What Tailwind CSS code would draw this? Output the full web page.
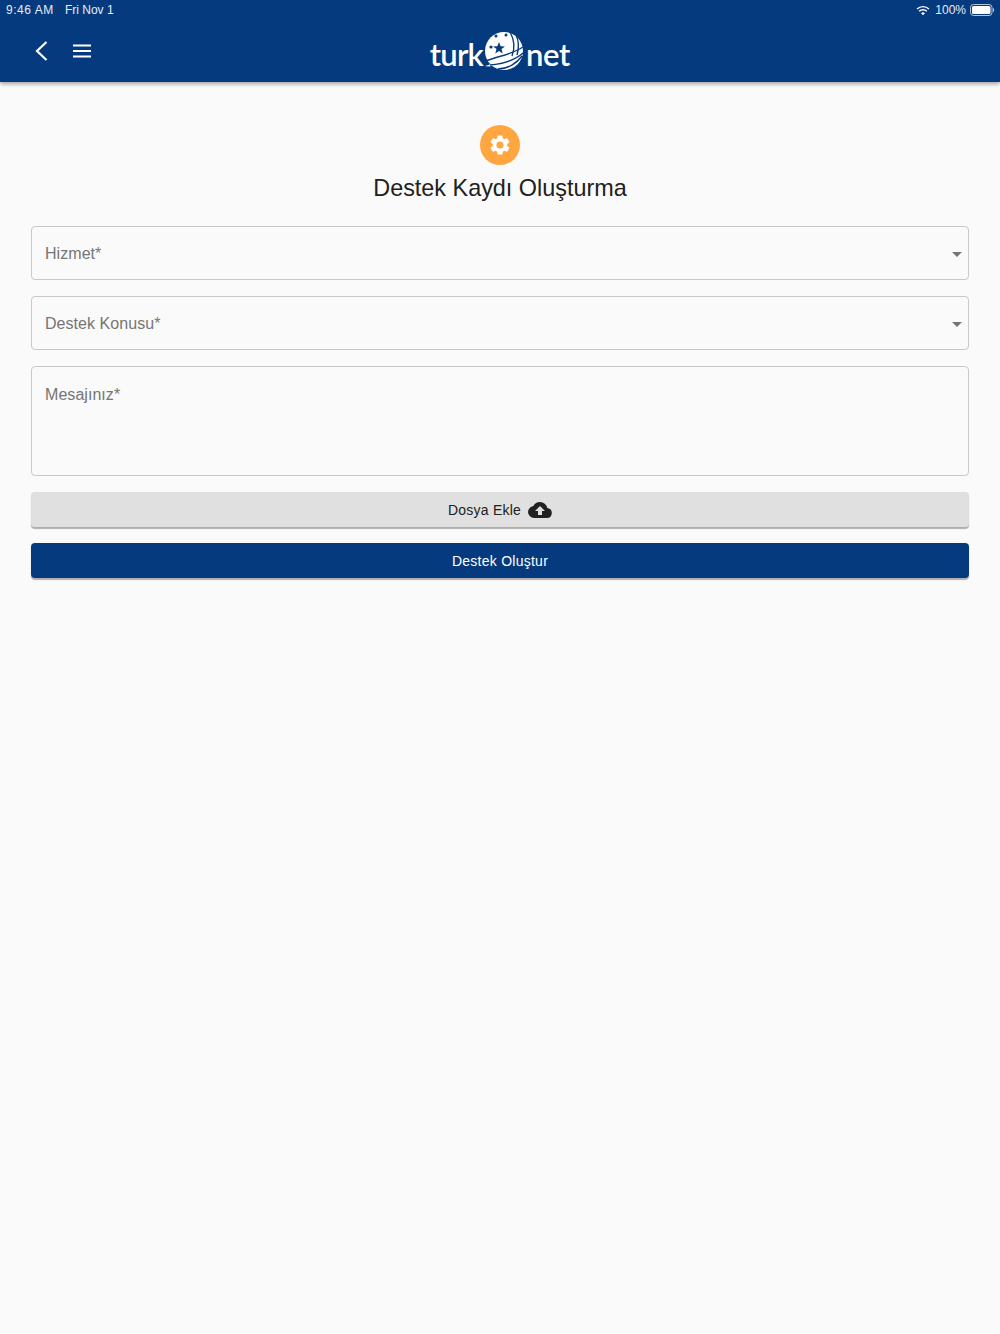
<!DOCTYPE html>
<html lang="tr">
<head>
    <meta charset="UTF-8">
    <meta name="viewport" content="width=device-width, initial-scale=1.0">
    <title>Destek Kaydı Oluşturma</title>
    <script src="https://cdn.jsdelivr.net/npm/@tailwindcss/browser@4"></script>
</head>
<body class="w-[1000px] h-[1334px] overflow-hidden bg-[#fafafa] font-['Liberation_Sans',sans-serif]">

<!-- header -->
<header class="h-[82px] bg-[#063a7e] text-white shadow-[0_2px_4px_rgba(0,0,0,0.35)]">
    <div class="h-[20px] pl-[6px] pr-[5px] flex items-center justify-between text-[12px] text-[#e6ecf4]">
        <div class="flex gap-[11px]">
            <span class="tracking-[0.55px]">9:46 AM</span>
            <span>Fri Nov 1</span>
        </div>
        <div class="flex items-center gap-[4px]">
            <svg class="mr-[1px]" width="14" height="11" viewBox="0 0 16 12" fill="none" stroke="#fff" stroke-width="1.7">
                <path d="M1.2 4.4a9.6 9.6 0 0 1 13.6 0"/>
                <path d="M3.6 6.9a6.2 6.2 0 0 1 8.8 0"/>
                <path d="M8 11.4l-2.2-2.2a3.1 3.1 0 0 1 4.4 0z" fill="#fff" stroke="none"/>
            </svg>
            <span>100%</span>
            <svg width="25" height="12" viewBox="0 0 25 12">
                <rect x="0.5" y="0.5" width="21.5" height="11" rx="3" fill="none" stroke="#b9c6d8"/>
                <rect x="2" y="2" width="18.5" height="8" rx="1.6" fill="#fff"/>
                <path d="M23 4v4a2 2 0 0 0 1.2-2A2 2 0 0 0 23 4z" fill="#b9c6d8"/>
            </svg>
        </div>
    </div>
    <div class="relative h-[62px] flex items-center justify-center">
        <div class="absolute left-[35px] top-[21px] flex items-center gap-[24px]">
            <svg width="13" height="20" viewBox="0 0 13 20" fill="none" stroke="#fff" stroke-width="2.2">
                <path d="M11.5 1L2 10l9.5 9"/>
            </svg>
            <svg width="20" height="14" viewBox="0 0 20 14" fill="#fff">
                <rect x="1" y="0.5" width="18" height="2"/>
                <rect x="1" y="6" width="18" height="2"/>
                <rect x="1" y="11.5" width="18" height="2"/>
            </svg>
        </div>
        <!-- logo -->
        <div class="flex items-end mt-[1px] font-['Lato',sans-serif] text-[31px] leading-[31px] font-semibold text-white">
            <span class="mb-[2px] tracking-[-0.8px]">turk</span>
            <svg class="ml-[1px] mr-[2px]" width="40" height="41" viewBox="0 0 40 41">
                <circle cx="20" cy="20" r="19" fill="#fff"/>
                <path d="M1 35c5-1 9-4 11-2-3 2-7 3-11 2z" fill="#fff"/>
                <g fill="none" stroke="#063a7e" stroke-width="1.4">
                    <path d="M26 1c4 7 5 16 2 24"/>
                    <path d="M32 4c3 6 3 13 1 20"/>
                    <path d="M2 30c12-5 25-6 37-14"/>
                    <path d="M6 34c12-1 24-4 33-12"/>
                    <path d="M14 38c10 0 19-6 24-13"/>
                </g>
                <path fill="#063a7e" d="M15 11l1.6 4.2 4.4.2-3.5 2.7 1.2 4.3-3.7-2.5-3.7 2.5 1.2-4.3-3.5-2.7 4.4-.2z"/>
                <circle cx="7" cy="16" r="1.6" fill="#063a7e"/>
                <circle cx="12" cy="5" r="1.5" fill="#063a7e"/>
                <circle cx="22" cy="4" r="1.5" fill="#063a7e"/>
            </svg>
            <span class="mb-[2px] tracking-[-0.3px]">net</span>
        </div>
    </div>
</header>

<main class="px-[31px]">
    <div class="flex flex-col items-center pt-[43px]">
        <div class="w-[40px] h-[40px] rounded-full bg-[#ffa640] flex items-center justify-center">
            <svg width="24" height="24" viewBox="0 0 24 24" fill="#fff">
                <path d="M19.14 12.94c.04-.3.06-.61.06-.94 0-.32-.02-.64-.07-.94l2.03-1.58a.49.49 0 0 0 .12-.61l-1.92-3.32a.49.49 0 0 0-.59-.22l-2.39.96c-.5-.38-1.03-.7-1.62-.94l-.36-2.54a.48.48 0 0 0-.48-.41h-3.84a.48.48 0 0 0-.47.41l-.36 2.54c-.59.24-1.13.57-1.62.94l-2.39-.96a.48.48 0 0 0-.59.22L2.74 8.87a.47.47 0 0 0 .12.61l2.03 1.58c-.05.3-.09.63-.09.94s.02.64.07.94l-2.03 1.58a.49.49 0 0 0-.12.61l1.92 3.32c.12.22.37.29.59.22l2.39-.96c.5.38 1.03.7 1.62.94l.36 2.54c.05.24.24.41.48.41h3.84c.24 0 .44-.17.47-.41l.36-2.54c.59-.24 1.13-.56 1.62-.94l2.39.96c.22.08.47 0 .59-.22l1.92-3.32a.47.47 0 0 0-.12-.61l-2.01-1.58zM12 15.6A3.6 3.6 0 1 1 12 8.4a3.6 3.6 0 0 1 0 7.2z"/>
            </svg>
        </div>
        <h1 class="mt-[9px] h-[28px] text-[23.4px] leading-[28px] text-[#212121]">Destek Kaydı Oluşturma</h1>
    </div>

    <form class="mt-[24px] flex flex-col gap-[16px]">
        <div class="relative h-[54px] border border-[#c8c8c8] rounded-[4px] pl-[13px] pt-[2px] flex items-center text-[16px] tracking-[0.05px] text-[#757575]">
            <span>Hizmet*</span>
            <span class="absolute right-[6px] top-[25px] w-0 h-0 border-x-[5px] border-x-transparent border-t-[5px] border-t-[#757575]"></span>
        </div>
        <div class="relative h-[54px] border border-[#c8c8c8] rounded-[4px] pl-[13px] pt-[2px] flex items-center text-[16px] tracking-[0.05px] text-[#757575]">
            <span>Destek Konusu*</span>
            <span class="absolute right-[6px] top-[25px] w-0 h-0 border-x-[5px] border-x-transparent border-t-[5px] border-t-[#757575]"></span>
        </div>
        <div class="h-[110px] border border-[#c8c8c8] rounded-[4px] pl-[13px] pt-[18px] text-[16px] leading-[20px] tracking-[0.05px] text-[#757575]">Mesajınız*</div>

        <button type="button" class="h-[35px] pt-[1px] rounded-[4px] bg-[#e0e0e0] flex items-center justify-center gap-[7px] text-[14px] tracking-[0.22px] text-[#212121] shadow-[0_2px_1px_rgba(0,0,0,0.3)]">
            Dosya Ekle
            <svg class="mt-[-1px]" width="24" height="24" viewBox="0 0 24 24" fill="#212121">
                <path d="M19.35 10.04A7.49 7.49 0 0 0 12 4a7.48 7.48 0 0 0-6.65 4.04A6 6 0 0 0 6 20h13a5 5 0 0 0 .35-9.96zM14 13v4h-4v-4H7l5-5 5 5h-3z"/>
            </svg>
        </button>
        <button type="button" class="h-[35px] pt-[1px] rounded-[4px] bg-[#063a7e] flex items-center justify-center text-[14px] tracking-[0.25px] text-white shadow-[0_2px_1px_rgba(0,0,0,0.3)]">
            Destek Oluştur
        </button>
    </form>
</main>
</body>
</html>
